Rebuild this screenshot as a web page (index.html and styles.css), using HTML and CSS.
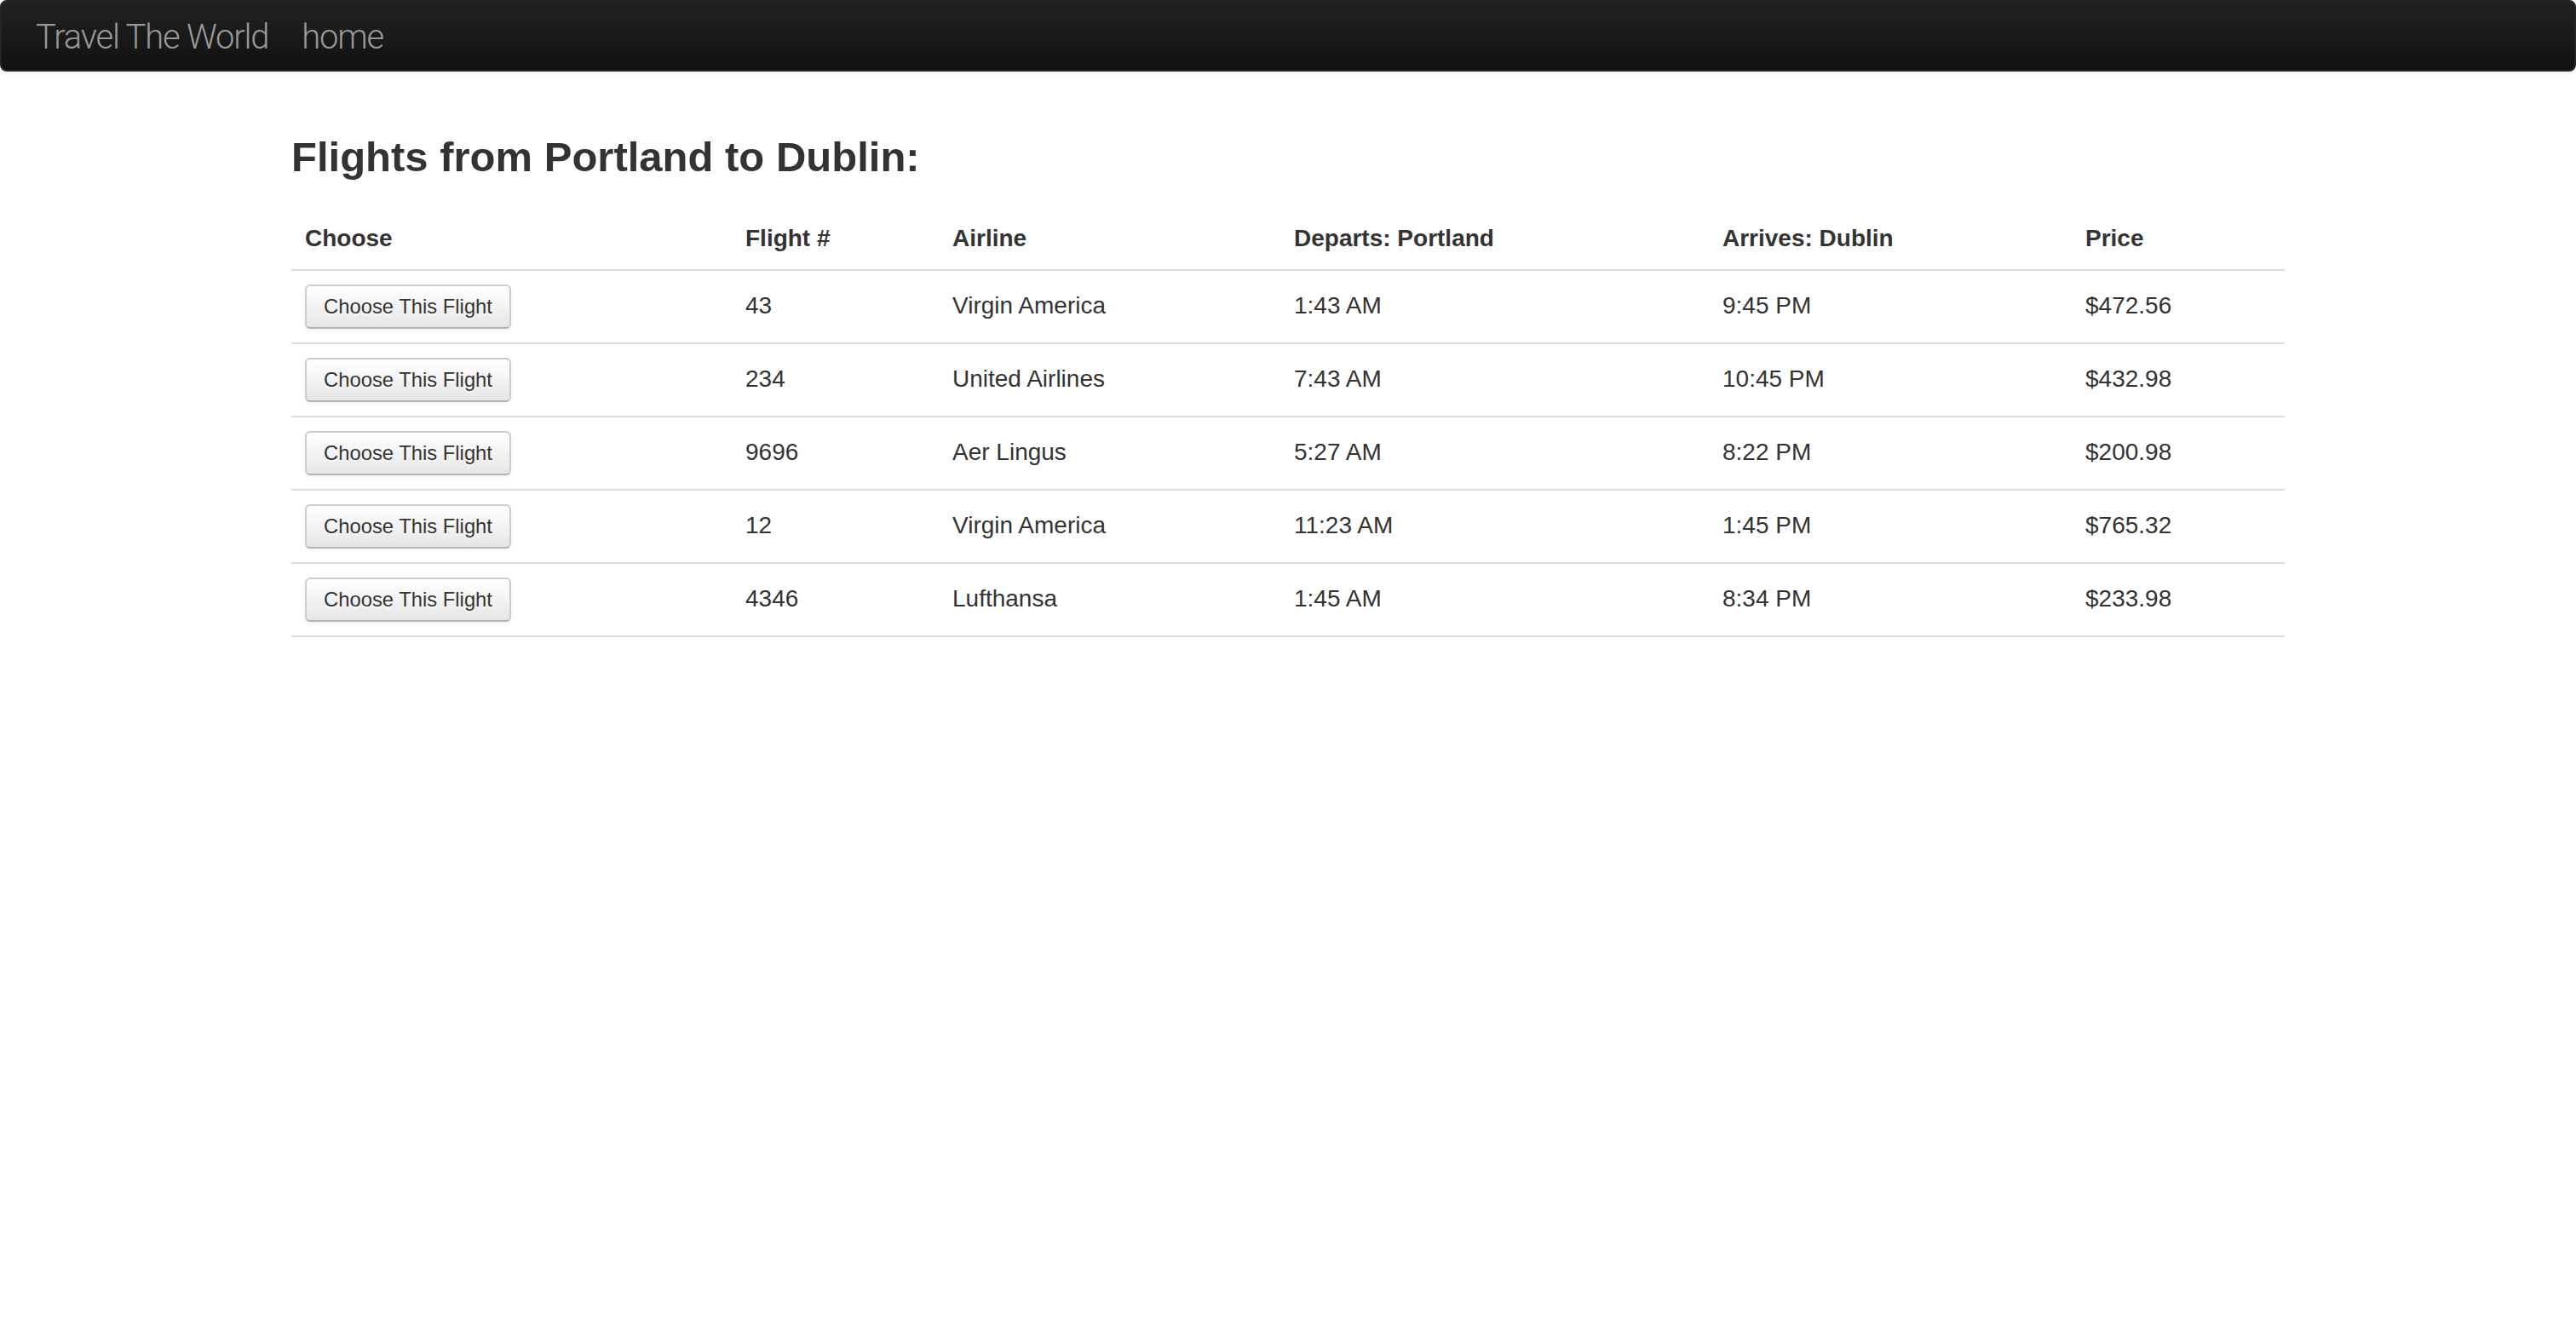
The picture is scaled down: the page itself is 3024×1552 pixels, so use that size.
FILE: index.html
```html
<!DOCTYPE html>
<html lang="en">
<head>
<meta charset="utf-8">
<title>Travel The World</title>
<link rel="stylesheet" href="styles.css">
</head>
<body>
<div class="navbar">
  <div class="navbar-inner">
    <a class="brand" href="#">Travel The World</a>
    <a class="brand" href="#">home</a>
  </div>
</div>
<div class="container">
  <h3 class="title">Flights from Portland to Dublin:</h3>
  <table class="flights">
    <colgroup>
      <col class="c-choose">
      <col class="c-num">
      <col class="c-airline">
      <col class="c-dep">
      <col class="c-arr">
      <col class="c-price">
    </colgroup>
    <thead>
      <tr><th>Choose</th><th>Flight #</th><th>Airline</th><th>Departs: Portland</th><th>Arrives: Dublin</th><th>Price</th></tr>
    </thead>
    <tbody>
      <tr><td><button class="btn">Choose This Flight</button></td><td>43</td><td>Virgin America</td><td>1:43 AM</td><td>9:45 PM</td><td>$472.56</td></tr>
      <tr><td><button class="btn">Choose This Flight</button></td><td>234</td><td>United Airlines</td><td>7:43 AM</td><td>10:45 PM</td><td>$432.98</td></tr>
      <tr><td><button class="btn">Choose This Flight</button></td><td>9696</td><td>Aer Lingus</td><td>5:27 AM</td><td>8:22 PM</td><td>$200.98</td></tr>
      <tr><td><button class="btn">Choose This Flight</button></td><td>12</td><td>Virgin America</td><td>11:23 AM</td><td>1:45 PM</td><td>$765.32</td></tr>
      <tr><td><button class="btn">Choose This Flight</button></td><td>4346</td><td>Lufthansa</td><td>1:45 AM</td><td>8:34 PM</td><td>$233.98</td></tr>
    </tbody>
  </table>
</div>
</body>
</html>
```

FILE: styles.css
```css
html, body {
  margin: 0;
  padding: 0;
  background: #fff;
}

body {
  font-family: "Liberation Sans", Arial, sans-serif;
  font-size: 28px;
  line-height: 40px;
  color: #333;
}

.navbar {
  margin-bottom: 40px;
}

.navbar-inner {
  display: flex;
  align-items: flex-start;
  gap: 39px;
  padding: 0 40px;
  min-height: 80px;
  background-image: linear-gradient(to bottom, #222222, #111111);
  border: 2px solid #252525;
  border-radius: 8px;
  box-shadow: 0 2px 8px rgba(0, 0, 0, 0.065);
}

.brand {
  display: block;
  padding: 22px 0 18px;
  font-family: Roboto, "Liberation Sans", sans-serif;
  font-size: 40px;
  font-weight: 300;
  line-height: 40px;
  color: #999;
  text-decoration: none;
  letter-spacing: -1.2px;
}

.container {
  display: flow-root;
  width: 2340px;
  margin: 0 auto;
}

.title {
  margin: 20px 0;
  font-size: 49px;
  line-height: 80px;
  font-weight: bold;
  color: #333;
}

.flights {
  width: 2340px;
  table-layout: fixed;
  border-collapse: collapse;
  border-spacing: 0;
  border-bottom: 2px solid #ddd;
  margin-bottom: 40px;
}

.c-choose { width: 517px; }
.c-num { width: 243px; }
.c-airline { width: 401px; }
.c-dep { width: 503px; }
.c-arr { width: 426px; }
.c-price { width: 250px; }

.flights th,
.flights td {
  padding: 16px;
  line-height: 40px;
  text-align: left;
  vertical-align: baseline;
  border-top: 2px solid #ddd;
}

.flights thead th {
  border-top: 0;
  font-weight: bold;
  vertical-align: bottom;
}

.btn {
  display: inline-block;
  margin: 0;
  padding: 4px 20px;
  font-family: "Liberation Sans", Arial, sans-serif;
  font-size: 23.8px;
  line-height: 40px;
  color: #333;
  text-shadow: 0 2px 2px rgba(255, 255, 255, 0.75);
  background-color: #f5f5f5;
  background-image: linear-gradient(to bottom, #ffffff, #e6e6e6);
  border: 2px solid #cccccc;
  border-bottom-color: #b3b3b3;
  border-radius: 6px;
  box-shadow: inset 0 2px 0 rgba(255, 255, 255, 0.2), 0 2px 4px rgba(0, 0, 0, 0.05);
  cursor: pointer;
}
```
